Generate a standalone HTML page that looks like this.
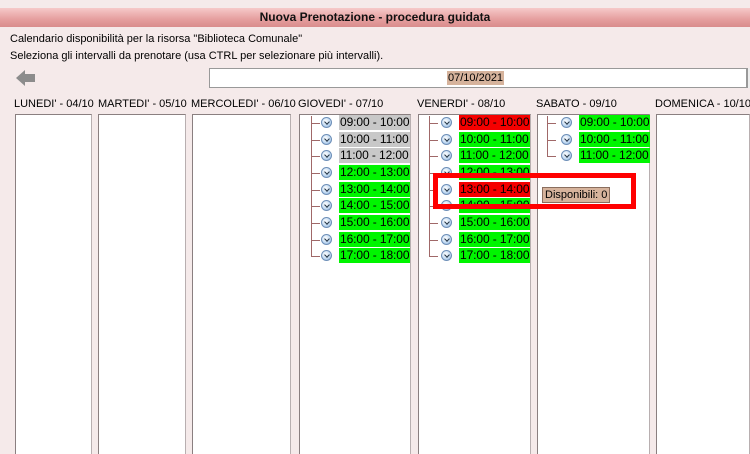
<!DOCTYPE html><html><head><meta charset="utf-8"><style>
*{margin:0;padding:0;box-sizing:border-box}
body{width:750px;height:449px;overflow:hidden;background:#f5eaea;font-family:"Liberation Sans",sans-serif;font-size:11px;color:#000;position:relative}
.a{position:absolute;white-space:nowrap}
.title{left:0;top:8px;width:750px;height:19px;background:linear-gradient(#f6c9c9,#e59e9e 60%,#d98c8c);text-align:center;font-family:"Liberation Sans",sans-serif;font-weight:bold;font-size:12px;line-height:19px;color:#111}
.col{position:absolute;top:114px;height:340px;background:#fff;border:1px solid #8a7f80;border-right-color:#b8afb0;border-bottom:none}
.hd{position:absolute;top:98px;font-size:11px;white-space:nowrap}
.vl{position:absolute;width:1px;background:#a06868}
.hl{position:absolute;height:1px;width:9px;background:#a06868}
.ic{position:absolute;width:11px;height:11px;border-radius:50%;background:radial-gradient(circle at 40% 35%,#fff,#bcd6f0 60%,#7fa4cf);border:1px solid #6d8fb8}
.ic:after{content:"";position:absolute;left:2.5px;top:1.5px;width:3px;height:3px;border-right:1.3px solid #234;border-bottom:1.3px solid #234;transform:rotate(45deg)}
.lb{position:absolute;height:15px;width:71px;font-family:"Liberation Sans",sans-serif;font-size:12px;line-height:15px;padding-left:1px;white-space:nowrap;overflow:hidden;letter-spacing:-0.1px}
.g{background:#00f500}.r{background:#f50000}.s{background:#c8c8c8}
</style></head><body>
<div class="a title">Nuova Prenotazione - procedura guidata</div>
<div class="a" style="left:10px;top:33px">Calendario disponibilità per la risorsa "Biblioteca Comunale"</div>
<div class="a" style="left:10px;top:50px">Seleziona gli intervalli da prenotare (usa CTRL per selezionare più intervalli).</div>
<svg class="a" style="left:15px;top:68px" width="22" height="20"><path d="M1 10 L10 2 L10 6 L20 6 L20 14 L10 14 L10 18 Z" fill="#8c8c8c"/></svg>
<div class="a" style="left:209px;top:68px;width:538px;height:20px;background:#fff;border:1px solid #999"></div>
<div class="a" style="left:447px;top:71px;height:14px;line-height:14px;background:#d6b39c;padding:0 1px">07/10/2021</div>
<div class="a" style="left:747px;top:68px;width:3px;height:20px;border-left:1px solid #999;background:#eee"></div>

<div class="hd" style="left:14px">LUNEDI' - 04/10</div>
<div class="hd" style="left:98px">MARTEDI' - 05/10</div>
<div class="hd" style="left:191px">MERCOLEDI' - 06/10</div>
<div class="hd" style="left:298px">GIOVEDI' - 07/10</div>
<div class="hd" style="left:417px">VENERDI' - 08/10</div>
<div class="hd" style="left:536px">SABATO - 09/10</div>
<div class="hd" style="left:655px">DOMENICA - 10/10</div>

<div class="col" style="left:15px;width:77px"></div>
<div class="col" style="left:98px;width:88px"></div>
<div class="col" style="left:192px;width:99px"></div>
<div class="col" style="left:299px;width:112px"></div>
<div class="col" style="left:418px;width:113px"></div>
<div class="col" style="left:537px;width:113px"></div>
<div class="col" style="left:656px;width:94px"></div>

<!-- Giovedi -->
<div class="vl" style="left:311px;top:116px;height:140px"></div>
<div class="hl" style="left:311px;top:123px"></div><div class="ic" style="left:321px;top:117px"></div><div class="lb s" style="left:339px;top:115px">09:00 - 10:00</div>
<div class="hl" style="left:311px;top:140px"></div><div class="ic" style="left:321px;top:134px"></div><div class="lb s" style="left:339px;top:132px">10:00 - 11:00</div>
<div class="hl" style="left:311px;top:156px"></div><div class="ic" style="left:321px;top:150px"></div><div class="lb s" style="left:339px;top:148px">11:00 - 12:00</div>
<div class="hl" style="left:311px;top:173px"></div><div class="ic" style="left:321px;top:167px"></div><div class="lb g" style="left:339px;top:165px">12:00 - 13:00</div>
<div class="hl" style="left:311px;top:190px"></div><div class="ic" style="left:321px;top:184px"></div><div class="lb g" style="left:339px;top:182px">13:00 - 14:00</div>
<div class="hl" style="left:311px;top:206px"></div><div class="ic" style="left:321px;top:200px"></div><div class="lb g" style="left:339px;top:198px">14:00 - 15:00</div>
<div class="hl" style="left:311px;top:223px"></div><div class="ic" style="left:321px;top:217px"></div><div class="lb g" style="left:339px;top:215px">15:00 - 16:00</div>
<div class="hl" style="left:311px;top:240px"></div><div class="ic" style="left:321px;top:234px"></div><div class="lb g" style="left:339px;top:232px">16:00 - 17:00</div>
<div class="hl" style="left:311px;top:256px"></div><div class="ic" style="left:321px;top:250px"></div><div class="lb g" style="left:339px;top:248px">17:00 - 18:00</div>

<!-- Venerdi -->
<div class="vl" style="left:429px;top:116px;height:140px"></div>
<div class="hl" style="left:429px;top:123px"></div><div class="ic" style="left:441px;top:117px"></div><div class="lb r" style="left:459px;top:115px">09:00 - 10:00</div>
<div class="hl" style="left:429px;top:140px"></div><div class="ic" style="left:441px;top:134px"></div><div class="lb g" style="left:459px;top:132px">10:00 - 11:00</div>
<div class="hl" style="left:429px;top:156px"></div><div class="ic" style="left:441px;top:150px"></div><div class="lb g" style="left:459px;top:148px">11:00 - 12:00</div>
<div class="hl" style="left:429px;top:173px"></div><div class="ic" style="left:441px;top:167px"></div><div class="lb g" style="left:459px;top:165px">12:00 - 13:00</div>
<div class="hl" style="left:429px;top:190px"></div><div class="ic" style="left:441px;top:184px"></div><div class="lb r" style="left:459px;top:182px">13:00 - 14:00</div>
<div class="hl" style="left:429px;top:206px"></div><div class="ic" style="left:441px;top:200px"></div><div class="lb g" style="left:459px;top:198px">14:00 - 15:00</div>
<div class="hl" style="left:429px;top:223px"></div><div class="ic" style="left:441px;top:217px"></div><div class="lb g" style="left:459px;top:215px">15:00 - 16:00</div>
<div class="hl" style="left:429px;top:240px"></div><div class="ic" style="left:441px;top:234px"></div><div class="lb g" style="left:459px;top:232px">16:00 - 17:00</div>
<div class="hl" style="left:429px;top:256px"></div><div class="ic" style="left:441px;top:250px"></div><div class="lb g" style="left:459px;top:248px">17:00 - 18:00</div>

<!-- Sabato -->
<div class="vl" style="left:547px;top:116px;height:40px"></div>
<div class="hl" style="left:547px;top:123px"></div><div class="ic" style="left:561px;top:117px"></div><div class="lb g" style="left:579px;top:115px">09:00 - 10:00</div>
<div class="hl" style="left:547px;top:140px"></div><div class="ic" style="left:561px;top:134px"></div><div class="lb g" style="left:579px;top:132px">10:00 - 11:00</div>
<div class="hl" style="left:547px;top:156px"></div><div class="ic" style="left:561px;top:150px"></div><div class="lb g" style="left:579px;top:148px">11:00 - 12:00</div>

<div class="a" style="left:433px;top:173px;width:203px;height:36px;border:5px solid #f00"></div>
<div class="a" style="left:542px;top:187px;width:68px;height:16px;background:#d6b39c;border:1px solid #8a6e5e;line-height:14px;padding-left:2px">Disponibili: 0</div>
</body></html>
